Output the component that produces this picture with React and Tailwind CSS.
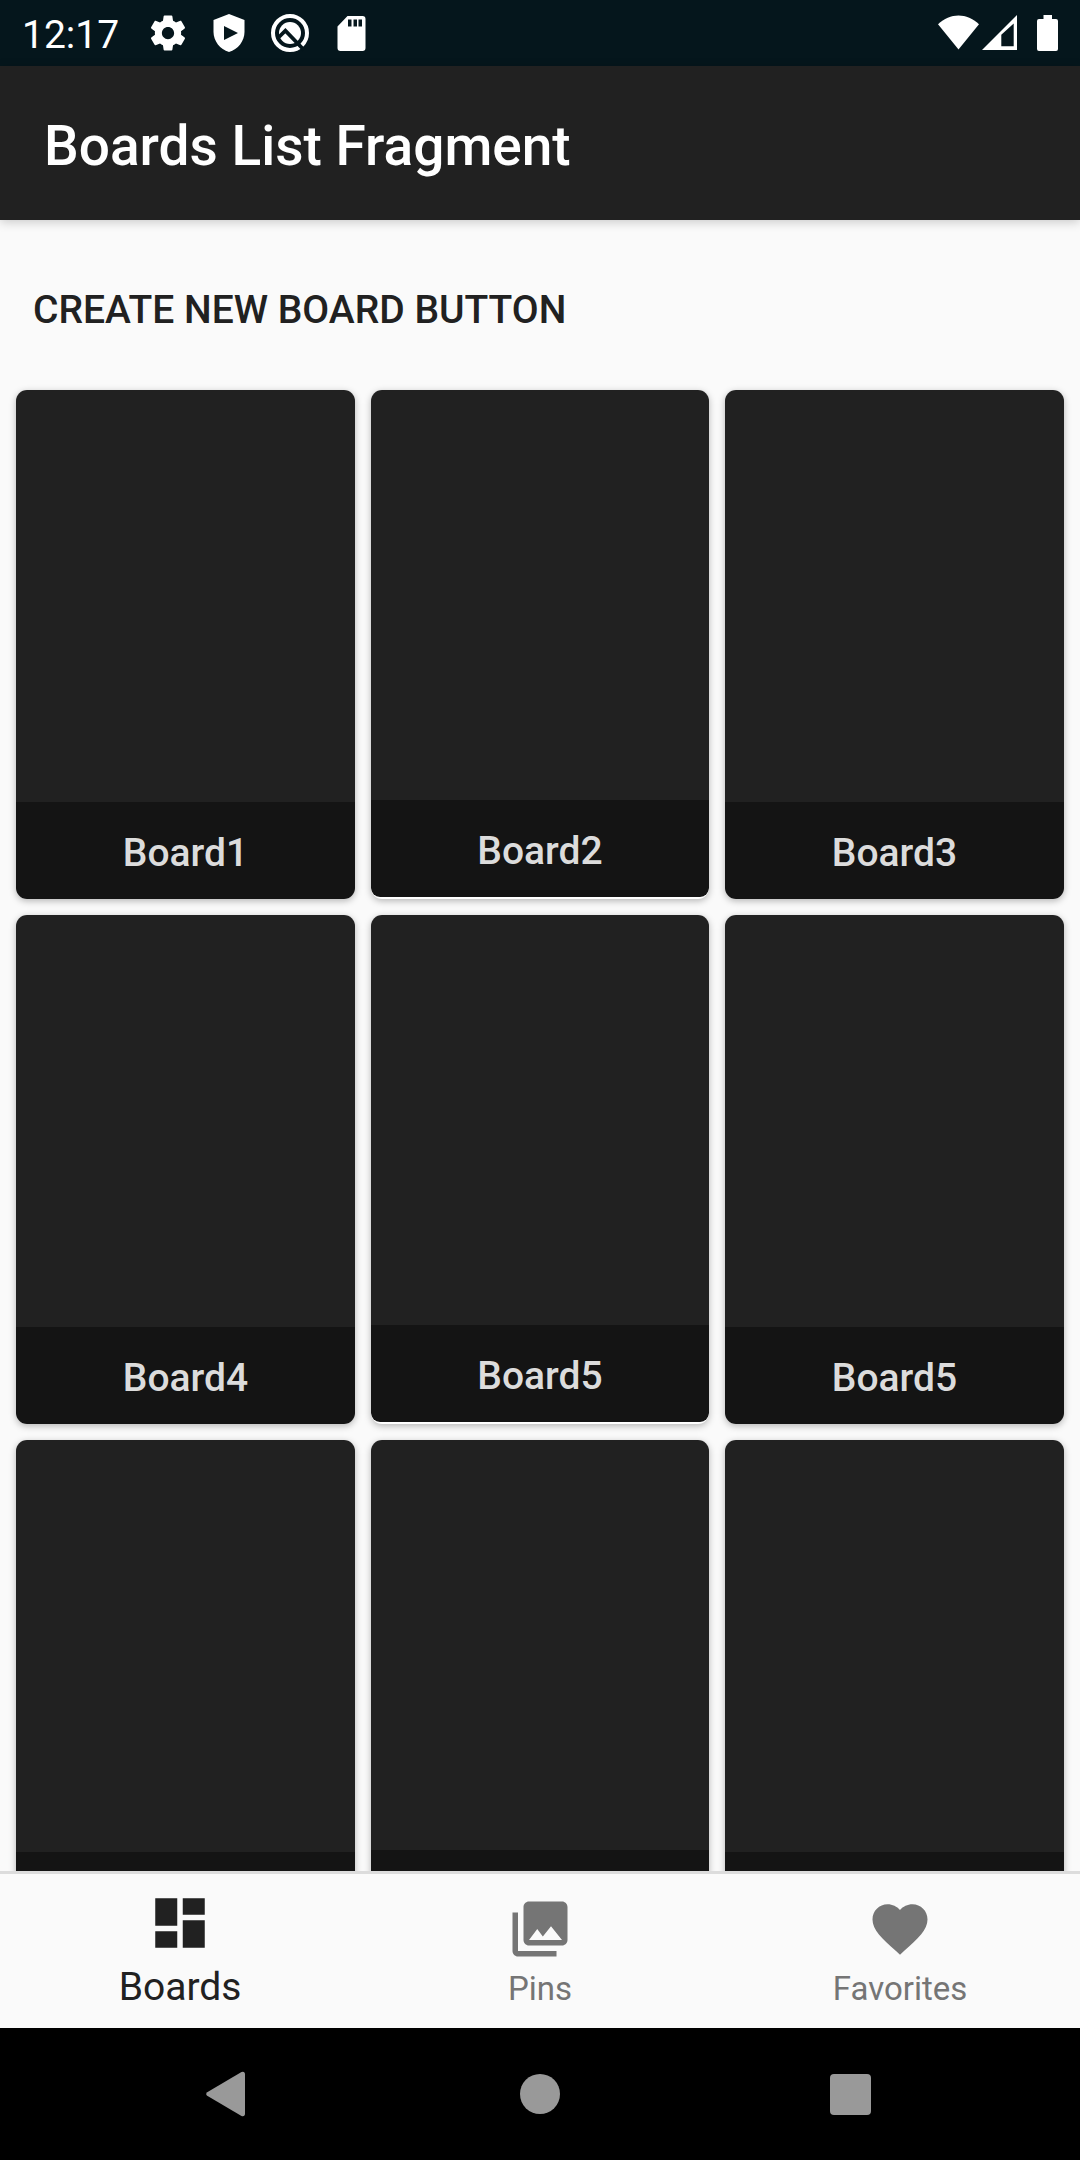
import React from 'react';

const boards = ['Board1', 'Board2', 'Board3', 'Board4', 'Board5', 'Board5', '', '', ''];

function StatusBar() {
  return (
    <div className="flex h-[66px] shrink-0 items-center bg-[#05161c] text-white">
      <div className="ml-[22px] mt-[3px] w-[125.3px] text-[39px] leading-[44px]">12:17</div>
      <svg className="h-[42px] w-[42px]" viewBox="0 0 24 24" fill="currentColor">
        <path d="M19.43 12.98c.04-.32.07-.64.07-.98s-.03-.66-.07-.98l2.11-1.65c.19-.15.24-.42.12-.64l-2-3.46c-.12-.22-.39-.3-.61-.22l-2.49 1c-.52-.4-1.08-.73-1.69-.98l-.38-2.65C14.46 2.18 14.25 2 14 2h-4c-.25 0-.46.18-.49.42l-.38 2.65c-.61.25-1.17.59-1.69.98l-2.49-1c-.23-.09-.49 0-.61.22l-2 3.46c-.13.22-.07.49.12.64l2.11 1.65c-.04.32-.07.65-.07.98s.03.66.07.98l-2.11 1.65c-.19.15-.24.42-.12.64l2 3.46c.12.22.39.3.61.22l2.49-1c.52.4 1.08.73 1.69.98l.38 2.65c.03.24.24.42.49.42h4c.25 0 .46-.18.49-.42l.38-2.65c.61-.25 1.17-.59 1.69-.98l2.49 1c.23.09.49 0 .61-.22l2-3.46c.12-.22.07-.49-.12-.64l-2.11-1.65zM12 15.5c-1.93 0-3.5-1.57-3.5-3.5s1.57-3.5 3.5-3.5 3.5 1.57 3.5 3.5-1.57 3.5-3.5 3.5z" />
      </svg>
      <svg className="ml-[24px] h-[38px] w-[32px]" viewBox="0 0 32 38" fill="currentColor">
        <path fillRule="evenodd" d="M16 0 31.500 6V18C31.500 27 25 35.500 16 38 7 35.500.500 27 .500 18V6ZM11 12V26L25 19Z" />
      </svg>
      <svg className="ml-[25px] h-[40px] w-[40px]" viewBox="0 0 40 40" fill="none">
        <circle cx="20" cy="20" r="17" stroke="white" strokeWidth="4" />
        <circle cx="20" cy="20" r="11" fill="white" />
        <path d="M9 24 15.400 17.700 34 37" stroke="#05161c" strokeWidth="3.8" />
      </svg>
      <svg className="ml-[27px] h-[35px] w-[29px]" viewBox="0 0 29 35" fill="currentColor">
        <path fillRule="evenodd" d="M10.500 0H25.500A3 3 0 0 1 28.500 3V32A3 3 0 0 1 25.500 35H3.500A3 3 0 0 1 .500 32V10.500ZM11 3.500V10.500H14.500V3.500ZM16.500 3.500V10.500H20V3.500ZM21.500 3.500V10.500H25V3.500Z" />
      </svg>
      <svg className="ml-auto mr-[22px] h-[36px] w-[120px]" viewBox="938 15 120 36" fill="currentColor">
        <path d="M938 24.300C950 12.500 967 12.500 979 24.300L958.500 49.500Z" />
        <path fillRule="evenodd" d="M982 50 1017 15V50ZM1001.300 34.800V46.300H1013.700V23.500Z" />
        <path d="M1043.500 15H1052V19H1056A2 2 0 0 1 1058 21V49A2 2 0 0 1 1056 51H1039A2 2 0 0 1 1037 49V21A2 2 0 0 1 1039 19H1043.500Z" />
      </svg>
    </div>
  );
}

function BoardCard({ name, short }) {
  return (
    <div className="flex h-[509px] flex-col overflow-hidden rounded-[11px] bg-white shadow-[0_2px_7px_rgba(0,0,0,0.28)]">
      <div className={short ? 'h-[410px] shrink-0 bg-[#212121]' : 'h-[412px] shrink-0 bg-[#212121]'} />
      <div
        className={
          'flex h-[97px] shrink-0 items-center justify-center bg-[#141414] pt-[5px] text-[39px] font-medium leading-[46px] text-[#dcdcdc] ' +
          (short ? 'rounded-b-[9px]' : '')
        }
      >
        {name}
      </div>
    </div>
  );
}

function BottomNav() {
  return (
    <nav className="grid h-[157px] shrink-0 grid-cols-3 border-t-[3px] border-[#dcdcdc] bg-[#fafafa] text-[#757575]">
      <div className="flex flex-col items-center pt-[16px] text-[#212121]">
        <svg className="h-[66px] w-[66px]" viewBox="0 0 24 24" fill="currentColor">
          <path d="M3 13h8V3H3v10zm0 8h8v-6H3v6zm10 0h8V11h-8v10zm0-18v6h8V3h-8z" />
        </svg>
        <span className="mt-[8px] text-[39px] leading-[46px]">Boards</span>
      </div>
      <div className="flex flex-col items-center pt-[22px]">
        <svg className="h-[66px] w-[66px]" viewBox="0 0 24 24" fill="currentColor">
          <path d="M22 16V4c0-1.100-.9-2-2-2H8c-1.100 0-2 .9-2 2v12c0 1.100.9 2 2 2h12c1.100 0 2-.9 2-2zm-11-4l2.030 2.710L16 11l4 5H8l3-4zM2 6v14c0 1.100.9 2 2 2h14v-2H4V6H2z" />
        </svg>
        <span className="mt-[7px] text-[33px] leading-[40px]">Pins</span>
      </div>
      <div className="flex flex-col items-center pt-[22px]">
        <svg className="h-[66px] w-[66px]" viewBox="0 0 24 24" fill="currentColor">
          <path d="M12 21.350l-1.450-1.320C5.400 15.360 2 12.280 2 8.500 2 5.420 4.420 3 7.500 3c1.740 0 3.410.81 4.500 2.090C13.090 3.810 14.760 3 16.500 3 19.580 3 22 5.420 22 8.500c0 3.780-3.400 6.860-8.550 11.540L12 21.350z" />
        </svg>
        <span className="mt-[7px] text-[33px] leading-[40px]">Favorites</span>
      </div>
    </nav>
  );
}

function SystemNav() {
  return (
    <div className="flex h-[132px] shrink-0 items-center justify-between bg-black pl-[206px] pr-[209px]">
      <svg className="h-[46px] w-[40px]" viewBox="0 0 40 46" fill="#999999">
        <path d="M1.200 21.200 35.500.9Q39 0 39 3.500V42.500Q39 46 35.500 45.100L1.200 24.800Q-.8 23 1.200 21.200Z" />
      </svg>
      <div className="ml-[4px] size-[40px] rounded-full bg-[#999999]" />
      <div className="h-[41px] w-[41px] rounded-[4px] bg-[#999999]" />
    </div>
  );
}

export default function App() {
  return (
    <div className="flex h-[2160px] w-[1080px] flex-col overflow-hidden bg-[#fafafa] font-[Roboto,sans-serif]">
      <StatusBar />
      <header className="z-10 flex h-[154px] shrink-0 items-center bg-[#212121] pl-[44px] pt-[5px] text-[55px] font-medium leading-[64px] text-white shadow-[0_2px_10px_rgba(0,0,0,0.2)]">
        Boards List Fragment
      </header>
      <main className="flex h-[1651px] shrink-0 flex-col overflow-hidden">
        <div className="flex h-[170px] shrink-0 items-center pl-[33px] pt-[10px] text-[39px] font-medium leading-[46px] text-[#212121]">
          CREATE NEW BOARD BUTTON
        </div>
        <div className="grid grid-cols-[339px_338px_339px] gap-4 px-4">
          {boards.map((name, i) => (
            <BoardCard key={i} name={name} short={i % 3 === 1} />
          ))}
        </div>
      </main>
      <BottomNav />
      <SystemNav />
    </div>
  );
}
